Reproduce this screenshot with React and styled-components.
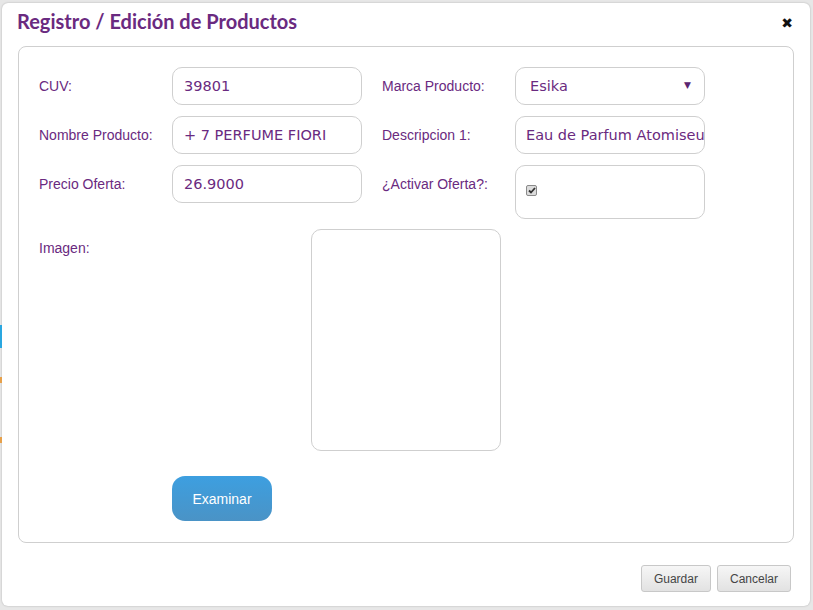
import React from "react";
import styled, { createGlobalStyle } from "styled-components";

const Global = createGlobalStyle`
  html, body { margin: 0; padding: 0; }
  body {
    background: #e7e7e7;
    font-family: "Liberation Sans", Arial, sans-serif;
    width: 813px;
    height: 610px;
    overflow: hidden;
  }
`;

const Backdrop = styled.div`
  width: 813px;
  height: 610px;
  padding: 3px 3px 4px 2px;
  box-sizing: border-box;
  position: relative;
`;

const EdgeMark = styled.div`
  position: absolute;
  left: 0;
  width: 2px;
  top: ${p => p.top}px;
  height: ${p => p.h}px;
  background: ${p => p.color};
`;

const Dialog = styled.div`
  width: 100%;
  height: 100%;
  background: #fff;
  border-radius: 6px;
  box-shadow: 0 0 2px rgba(0,0,0,0.25);
  box-sizing: border-box;
  display: flex;
  flex-direction: column;
  padding: 0 16px 0 15px;
`;

const Header = styled.div`
  height: 43px;
  display: flex;
  align-items: flex-start;
  justify-content: space-between;
  box-sizing: border-box;
  padding-top: 6px;
`;

const Title = styled.h1`
  margin: 0;
  font-family: Lato, "Noto Sans", sans-serif;
  font-weight: 700;
  font-size: 20px;
  line-height: 24px;
  color: #6a2a80;
`;

const Close = styled.span`
  font-family: "DejaVu Sans", sans-serif;
  font-weight: 700;
  font-size: 14px;
  line-height: 16px;
  color: #111;
  margin-top: 6px;
  margin-right: 1px;
`;

const Fieldset = styled.div`
  margin-left: 1px;
  border: 1px solid #cfcfcf;
  border-radius: 8px;
  padding: 20px;
  height: 497px;
  box-sizing: border-box;
`;

const FormGrid = styled.div`
  display: grid;
  grid-template-columns: 323px 323px;
  column-gap: 20px;
  row-gap: 11px;
  align-items: start;
`;

const Pair = styled.div`
  display: grid;
  grid-template-columns: 133px 190px;
`;

const Label = styled.label`
  font-size: 14px;
  color: #6a2a80;
  padding-top: 11px;
`;

const Field = styled.div`
  height: ${p => p.h || 38}px;
  border: 1px solid #cfcfcf;
  border-radius: 10px;
  box-sizing: border-box;
  display: flex;
  align-items: ${p => (p.top ? "flex-start" : "center")};
  padding: 0 ${p => p.pr ?? 11}px 0 ${p => p.pl ?? 11}px;
  font-family: "DejaVu Sans", Verdana, sans-serif;
  font-size: 14.5px;
  color: #6a2a80;
  white-space: nowrap;
  overflow: hidden;
`;

const SelectText = styled.span`
  flex: 1;
`;

const Arrow = styled.span`
  font-size: 9px;
  color: #5b2470;
  margin-bottom: 3px;
`;

const Check = styled.span`
  width: 11px;
  height: 11px;
  margin-top: 19px;
  border: 1px solid #8a8a8a;
  border-radius: 2px;
  background: #dcdcdc;
  box-sizing: border-box;
  display: flex;
  align-items: center;
  justify-content: center;
`;

const ImageRow = styled.div`
  display: grid;
  grid-template-columns: 272px 190px;
  margin-top: 10px;
`;

const ImageBox = styled.div`
  height: 222px;
  border: 1px solid #cfcfcf;
  border-radius: 10px;
  box-sizing: border-box;
`;

const BrowseButton = styled.button`
  margin: 25px 0 0 133px;
  width: 100px;
  height: 45px;
  border: none;
  border-radius: 13px;
  background: linear-gradient(#3d9fe0, #4a93c6);
  color: #fff;
  font-family: "Liberation Sans", Arial, sans-serif;
  font-size: 14px;
`;

const Footer = styled.div`
  display: flex;
  justify-content: flex-end;
  gap: 6px;
  padding: 22px 3px 0 0;
`;

const FootButton = styled.button`
  height: 27px;
  padding: 0 12px;
  border: 1px solid #c8c8c8;
  border-radius: 3px;
  background: linear-gradient(#f6f6f6, #e2e2e2);
  color: #454545;
  font-family: "Liberation Sans", Arial, sans-serif;
  font-size: 12px;
`;

export default function App() {
  return (
    <>
      <Global />
      <Backdrop>
        <EdgeMark top={325} h={23} color="#2aa7e0" />
        <EdgeMark top={377} h={6} color="#e6a04a" />
        <EdgeMark top={437} h={6} color="#e6a04a" />
        <Dialog>
          <Header>
            <Title>Registro / Edición de Productos</Title>
            <Close>✖</Close>
          </Header>
          <Fieldset>
            <FormGrid>
              <Pair>
                <Label>CUV:</Label>
                <Field>39801</Field>
              </Pair>
              <Pair>
                <Label>Marca Producto:</Label>
                <Field pl={14} pr={13}>
                  <SelectText>Esika</SelectText>
                  <Arrow>▼</Arrow>
                </Field>
              </Pair>

              <Pair>
                <Label>Nombre Producto:</Label>
                <Field>+ 7 PERFUME FIORI</Field>
              </Pair>
              <Pair>
                <Label>Descripcion 1:</Label>
                <Field pl={10} pr={9}>Eau de Parfum Atomiseur</Field>
              </Pair>

              <Pair>
                <Label>Precio Oferta:</Label>
                <Field>26.9000</Field>
              </Pair>
              <Pair>
                <Label>¿Activar Oferta?:</Label>
                <Field h={54} top pl={10}>
                  <Check>
                    <svg width="8" height="7" viewBox="0 0 8 7">
                      <path d="M1 3.5 L3 5.5 L7 1" stroke="#333" strokeWidth="1.8" fill="none" />
                    </svg>
                  </Check>
                </Field>
              </Pair>
            </FormGrid>
            <ImageRow>
              <Label>Imagen:</Label>
              <ImageBox />
            </ImageRow>
            <BrowseButton>Examinar</BrowseButton>
          </Fieldset>
          <Footer>
            <FootButton>Guardar</FootButton>
            <FootButton>Cancelar</FootButton>
          </Footer>
        </Dialog>
      </Backdrop>
    </>
  );
}
